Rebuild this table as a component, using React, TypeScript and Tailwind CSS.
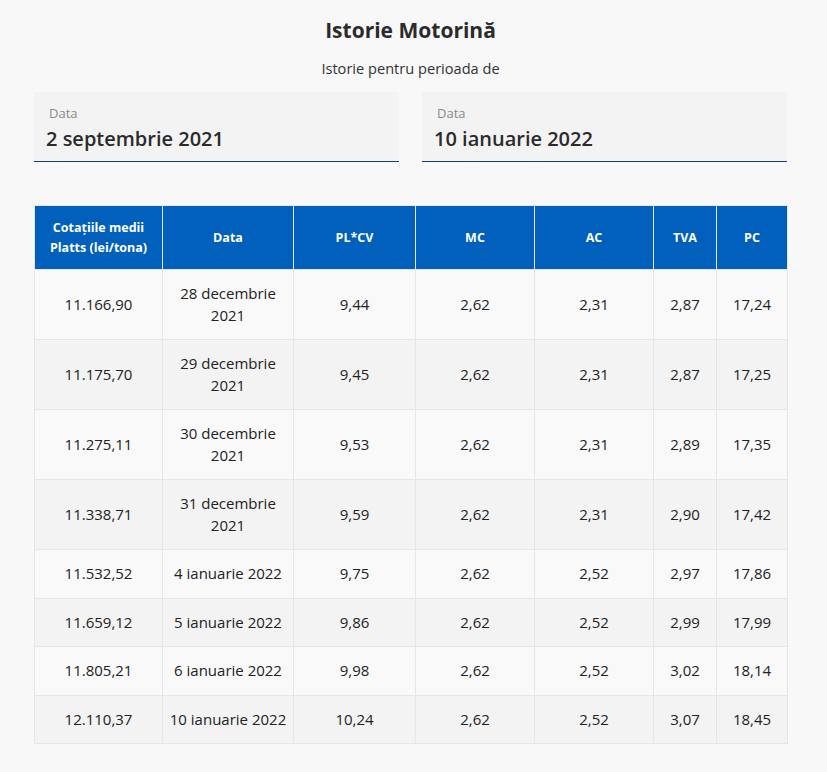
import React from "react";

const rows: [string, string, string, string, string, string, string][] = [
  ["11.166,90", "28 decembrie 2021", "9,44", "2,62", "2,31", "2,87", "17,24"],
  ["11.175,70", "29 decembrie 2021", "9,45", "2,62", "2,31", "2,87", "17,25"],
  ["11.275,11", "30 decembrie 2021", "9,53", "2,62", "2,31", "2,89", "17,35"],
  ["11.338,71", "31 decembrie 2021", "9,59", "2,62", "2,31", "2,90", "17,42"],
  ["11.532,52", "4 ianuarie 2022", "9,75", "2,62", "2,52", "2,97", "17,86"],
  ["11.659,12", "5 ianuarie 2022", "9,86", "2,62", "2,52", "2,99", "17,99"],
  ["11.805,21", "6 ianuarie 2022", "9,98", "2,62", "2,52", "3,02", "18,14"],
  ["12.110,37", "10 ianuarie 2022", "10,24", "2,62", "2,52", "3,07", "18,45"],
];

const headers = ["Cotațiile medii Platts (lei/tona)", "Data", "PL*CV", "MC", "AC", "TVA", "PC"];
const widths = ["w-[128px]", "w-[131px]", "w-[122px]", "w-[119px]", "w-[119px]", "w-[63px]", "w-[71px]"];

function DateField({ value }: { value: string }) {
  return (
    <div className="flex-1 bg-[#f3f3f3] border-b border-[#0f3f8c] pt-[13px] px-[12px] h-[70px]">
      <div className="text-[13px] leading-[16px] text-[#8a8a8a] pl-[3px]">Data</div>
      <div className="text-[20px] leading-[30px] font-semibold text-[#2b2b2b] mt-[3px]">{value}</div>
    </div>
  );
}

export default function App() {
  return (
    <div
      className="min-h-[772px] bg-[#f8f8f8] text-[#2b2b2b]"
      style={{ fontFamily: '"Open Sans", "Noto Sans", sans-serif' }}
    >
      <div className="w-[753px] ml-[34px] pt-[16px]">
        <h1 className="text-center text-[21px] leading-[28px] font-bold text-[#2b2b2b]">Istorie Motorină</h1>
        <p className="text-center text-[14.6px] leading-[20px] mt-[14px] text-[#333]">Istorie pentru perioada de</p>
        <div className="flex gap-[23px] mt-[14px]">
          <DateField value="2 septembrie 2021" />
          <DateField value="10 ianuarie 2022" />
        </div>
        <table className="mt-[43px] w-[753px] table-fixed border-collapse border border-[#e6e6e6]">
          <colgroup>
            {widths.map((w, i) => (
              <col key={i} className={w} />
            ))}
          </colgroup>
          <thead>
            <tr className="bg-[#0060bc]">
              {headers.map((h, i) => (
                <th
                  key={i}
                  className="h-[64px] px-[8px] text-white text-[12.5px] leading-[20px] font-bold text-center border-x border-[#e6e6e6]"
                >
                  {h}
                </th>
              ))}
            </tr>
          </thead>
          <tbody>
            {rows.map((r, ri) => (
              <tr key={ri} className={ri % 2 === 0 ? "bg-[#f9f9f9]" : "bg-[#f3f3f3]"}>
                {r.map((c, ci) => (
                  <td
                    key={ci}
                    className="px-[6px] py-[13px] text-[15px] leading-[21.5px] text-center text-[#222] border border-[#e6e6e6]"
                  >
                    {c}
                  </td>
                ))}
              </tr>
            ))}
          </tbody>
        </table>
      </div>
    </div>
  );
}
